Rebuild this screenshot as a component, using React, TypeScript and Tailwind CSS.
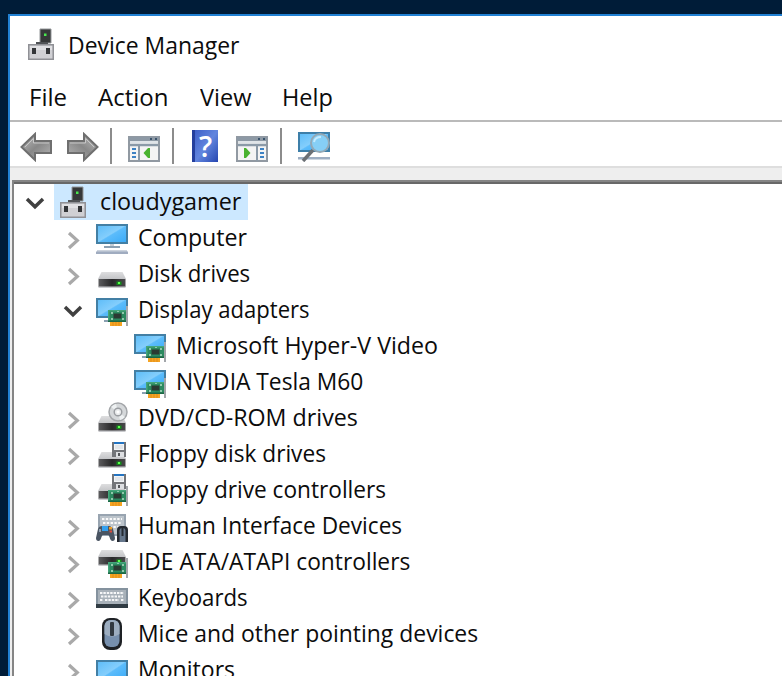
import React, { useLayoutEffect, useRef, useState } from "react";

const FONT = "font-['Open_Sans','Noto_Sans',sans-serif]";

function Label({ text, width }: { text: string; width: number }) {
  const ref = useRef<HTMLSpanElement>(null);
  const [scale, setScale] = useState(1);
  useLayoutEffect(() => {
    if (ref.current) setScale(width / ref.current.offsetWidth);
  }, [width]);
  return (
    <span className="block shrink-0" style={{ width }}>
      <span
        ref={ref}
        className="inline-block origin-left whitespace-nowrap text-[24px] leading-[34px] text-[#0c0c0c]"
        style={{ transform: `scaleX(${scale})` }}
      >
        {text}
      </span>
    </span>
  );
}

function Svg({ children, w = 32, h = 32 }: { children: React.ReactNode; w?: number; h?: number }) {
  return (
    <svg width={w} height={h} viewBox={`0 0 ${w} ${h}`} fill="none" className="block shrink-0">
      {children}
    </svg>
  );
}

function Defs() {
  return (
    <svg width="0" height="0" className="absolute">
      <defs>
        <linearGradient id="screen" x1="0" y1="0" x2="1" y2="1">
          <stop offset="0" stopColor="#5cbcf8" />
          <stop offset="0.48" stopColor="#84cefc" />
          <stop offset="0.52" stopColor="#5cbcfb" />
          <stop offset="1" stopColor="#38aaf8" />
        </linearGradient>
        <linearGradient id="metal" x1="0" y1="0" x2="0" y2="1">
          <stop offset="0" stopColor="#dededf" />
          <stop offset="1" stopColor="#c3c4c7" />
        </linearGradient>
        <linearGradient id="dark" x1="0" y1="0" x2="1" y2="0">
          <stop offset="0" stopColor="#5c5c5e" />
          <stop offset="0.5" stopColor="#29292a" />
          <stop offset="1" stopColor="#4a4a4c" />
        </linearGradient>
        <linearGradient id="arrow" x1="0" y1="0" x2="1" y2="1">
          <stop offset="0" stopColor="#c2c2c2" />
          <stop offset="0.5" stopColor="#888" />
          <stop offset="1" stopColor="#b5b5b5" />
        </linearGradient>
      </defs>
    </svg>
  );
}

function Screen({ y = 2, h = 20 }: { y?: number; h?: number }) {
  return <rect x="1" y={y + 1} width="30" height={h - 2} fill="url(#screen)" stroke="#437fa4" strokeWidth="2" />;
}

function Drive({ y }: { y: number }) {
  return (
    <g transform={`translate(0 ${y})`}>
      <path d="M5.5 0H26.5L30 7H2Z" fill="url(#metal)" />
      <rect x="2.5" y="7" width="27" height="8" fill="url(#dark)" />
      <rect x="2.5" y="14.5" width="27" height="1.5" fill="#c9cacd" />
      <rect x="20.5" y="9.5" width="5" height="3.5" fill="#168c1c" />
      <rect x="22" y="10" width="2" height="2" fill="#5cff4c" />
    </g>
  );
}

function Card() {
  return (
    <g>
      <rect x="30" y="12" width="2" height="20" fill="#a3a6aa" />
      <rect x="12" y="16" width="18" height="12" fill="#2c8a60" />
      <path d="M12 16h18v1.5H12zM12 16h1.5v12H12z" fill="#45a67b" />
      <path d="M12 26.5h18V28H12z" fill="#1c6744" />
      <rect x="17.5" y="19.5" width="8" height="5" fill="#2b3a33" />
      <path d="M15 18h2v2h-2zM26 18h2v2h-2zM15 24h2v2h-2zM26 24h2v2h-2zM21 17h2v1h-2z" fill="#91c9ac" />
      <rect x="14" y="28" width="12" height="4" fill="#f6a423" />
      <path d="M17 28v4M20 28v4M23 28v4" stroke="#e08c1a" strokeWidth="1" />
    </g>
  );
}

function Floppy({ y }: { y: number }) {
  return (
    <g transform={`translate(16 ${y})`}>
      <rect width="14" height="15" fill="#737579" />
      <rect x="2" width="10" height="8" fill="#f2f4f6" />
      <rect x="2" width="10" height="2" fill="#2374c2" />
      <path d="M3 4h8M3 6h8" stroke="#d3d7db" />
      <rect x="4" y="10" width="8" height="5" fill="#dddfe2" />
      <rect x="6" y="11" width="2" height="3" fill="#54565a" />
    </g>
  );
}

const icons: Record<string, React.ReactNode> = {
  computer: (
    <>
      <Screen />
      <rect x="14" y="22" width="4" height="2" fill="#c6ced6" />
      <rect x="8" y="24" width="16" height="2" fill="#8ba0b2" />
      <path d="M2 28h28l2 2v2H0v-2z" fill="#a0acc0" />
      <path d="M2 28h28l1 1.5H1z" fill="#ccd3dd" />
    </>
  ),
  disk: <Drive y={14} />,
  display: (
    <>
      <Screen y={4} />
      <rect x="8" y="26" width="5" height="2" fill="#8ba0b2" />
      <Card />
    </>
  ),
  dvd: (
    <>
      <Drive y={14} />
      <circle cx="22" cy="10" r="9" fill="#d5d8da" stroke="#a4a7aa" strokeWidth="1.5" />
      <path d="M22 10L15 5a9 9 0 0 1 5-3zM22 10l7 5a9 9 0 0 1-5 3z" fill="#eef1f2" />
      <circle cx="22" cy="10" r="3.8" fill="#e8eaeb" stroke="#9a9da1" strokeWidth="1.4" />
      <circle cx="22" cy="10" r="1.5" fill="#fff" />
    </>
  ),
  floppy: (
    <>
      <Drive y={14} />
      <Floppy y={4} />
    </>
  ),
  floppyController: (
    <>
      <Drive y={10} />
      <Floppy y={0} />
      <Card />
    </>
  ),
  hid: (
    <>
      <rect x="3" y="5" width="26" height="20" fill="#bcc4cb" stroke="#98a4b0" strokeWidth="2" />
      <path d="M6 9h20M7 13h18M6 17h20" stroke="#fafafa" strokeWidth="2" strokeDasharray="2.4 1.4" />
      <path
        d="M0 28L2 19Q3 16 6 16H13Q16 16 17 19L19 28Q19 31 16.5 31Q14.5 31 13.5 27L12.5 25H6.5L5.5 27Q4.5 31 2.5 31Q0 31 0 28Z"
        fill="#4a5563"
      />
      <path d="M3 19h2v3H3z" fill="#8fa0b2" />
      <rect x="6" y="16" width="6" height="5" fill="#35a1ef" />
      <path d="M13 17h3v2.5h-3z" fill="#f0a128" />
      <path d="M13.5 20.5h2.5v2h-2.5z" fill="#de4b3a" />
      <path d="M21 32V20Q21 16 25 16H28Q32 16 32 20V32Z" fill="#252a31" />
      <path d="M23.5 32V21Q23.5 18 26.5 18T29.5 21V32Z" fill="#66778c" />
      <path d="M26.5 18v8" stroke="#252a31" strokeWidth="2" />
    </>
  ),
  ide: (
    <>
      <Drive y={4} />
      <Card />
    </>
  ),
  keyboard: (
    <>
      <rect x="1" y="7" width="30" height="17" fill="#a8b1b9" stroke="#84929e" strokeWidth="2" />
      <path
        d="M4 11h24M5 14.5h22M4 18h3M9 18h14M25 18h3"
        stroke="#f6f7f8"
        strokeWidth="2"
        strokeDasharray="2.4 1"
      />
      <rect x="0" y="22" width="32" height="4" fill="#303b43" />
    </>
  ),
  mouse: (
    <>
      <rect x="6" y="0" width="20" height="32" rx="8" fill="#1e2125" />
      <rect x="8.5" y="2" width="15" height="27" rx="6" fill="#7790ae" />
      <path d="M8.5 16V8Q9 2 16 2Q23 2 23.5 8V16Q16 21 8.5 16Z" fill="#9cadc0" />
      <rect x="14" y="4" width="4" height="14" rx="1" fill="#303840" />
    </>
  ),
  monitor: (
    <>
      <Screen y={6} h={22} />
      <rect x="8" y="30" width="16" height="2" fill="#8ba0b2" />
    </>
  ),
};

function DeviceIcon() {
  return (
    <Svg w={26} h={32}>
      <path d="M12 1h11v14H12z" fill="#363839" stroke="#95989b" strokeWidth="1" />
      <rect x="16" y="5.5" width="2.5" height="2.5" fill="#49e84e" />
      <path d="M8 14h12v2H8z" fill="#505356" />
      <rect x="0.75" y="16.75" width="24.5" height="14.5" fill="#d0d0d4" stroke="#909196" strokeWidth="1.5" />
      <path d="M2 18h22v4H2z" fill="#e0e0e3" />
      <path d="M4 20h4v6H4zM18 20h4v6h-4z" fill="#333538" />
    </Svg>
  );
}

function ChevronRight() {
  return (
    <Svg w={20} h={36}>
      <path d="M6 13L14.3 20.5L6 28" stroke="#a9a9a9" strokeWidth="3.2" />
    </Svg>
  );
}

function ChevronDown() {
  return (
    <Svg w={20} h={36}>
      <path d="M2 15L10 22.7L18 15" stroke="#404040" strokeWidth="3.5" />
    </Svg>
  );
}

function Arrow({ flip }: { flip?: boolean }) {
  return (
    <svg width="33" height="30" viewBox="0 0 33 30" className={flip ? "block -scale-x-100" : "block"}>
      <path d="M1.5 15L15 2V9H31V21H15V28Z" fill="url(#arrow)" stroke="#6f6f6f" strokeWidth="2" />
      <path d="M5 15L13.5 6.5V11H29" fill="none" stroke="#c7c7c7" strokeWidth="1" />
    </svg>
  );
}

function PaneIcon({ flip }: { flip?: boolean }) {
  const side = flip ? 20 : 0;
  return (
    <Svg w={32} h={26}>
      <rect x="1" y="1" width="30" height="24" fill="#f4f4f4" stroke="#9199a2" strokeWidth="2" />
      <rect x="1" y="1" width="30" height="4" fill="#8d99a5" />
      <path d="M22 3h2M27 3h2" stroke="#3a536b" strokeWidth="2" />
      <path d="M2 6h28" stroke="#dfe4e8" strokeWidth="2" />
      <path d="M2 9h28" stroke="#8b9aa8" strokeWidth="2.5" />
      <path d={flip ? "M21 9v16" : "M11 9v16"} stroke="#8b9aa8" strokeWidth="2" />
      <path d={`M${side + 4} 13h4M${side + 4} 17h4M${side + 4} 21h4`} stroke="#3d82c4" strokeWidth="2" />
      <path d={flip ? "M8 12h2L14.5 17L10 22H8Z" : "M22 12h-2L15.5 17L20 22H22Z"} fill="#49b22f" />
    </Svg>
  );
}

function Separator() {
  return <div className="h-9 w-[2px] shrink-0 bg-[#8c8c8c]" />;
}

function Toolbar() {
  return (
    <div className="flex h-11 shrink-0 items-center pl-[10px]">
      <div className="pt-[5px]"><Arrow /></div>
      <div className="ml-[13px] pt-[5px]"><Arrow flip /></div>
      <div className="ml-[11px] pt-1"><Separator /></div>
      <div className="ml-4 pt-[9px]"><PaneIcon /></div>
      <div className="ml-[12px] pt-1"><Separator /></div>
      <div className="ml-[18px] pt-1">
        <div className="flex h-8 w-[26px] items-center justify-center border-l-[3px] border-[#243f9d] bg-linear-to-br from-[#3e60c8] via-[#6285de] to-[#2745b0] pr-[2px] font-['Open_Sans',sans-serif] text-[29px] font-semibold leading-8 text-white">
          ?
        </div>
      </div>
      <div className="ml-[18px] pt-[9px]"><PaneIcon flip /></div>
      <div className="ml-[12px] pt-1"><Separator /></div>
      <div className="ml-4 pt-1">
        <Svg w={32} h={32}>
          <rect x="1" y="3" width="30" height="18" fill="url(#screen)" stroke="#3d7fa9" strokeWidth="2" />
          <path d="M0 27h32v2.5H0z" fill="#9daec2" />
          <path d="M15 20L5 31" stroke="#6b7075" strokeWidth="3.5" />
          <circle cx="22" cy="13" r="9" fill="#86cff6" stroke="#93a8b5" strokeWidth="2" />
          <path d="M16 12Q17 7 23 7" stroke="#c4ebff" strokeWidth="2" />
        </Svg>
      </div>
    </div>
  );
}

interface Device {
  text: string;
  width: number;
  icon: string;
  open?: boolean;
  child?: boolean;
}

const devices: Device[] = [
  { text: "Computer", width: 109, icon: "computer" },
  { text: "Disk drives", width: 112, icon: "disk" },
  { text: "Display adapters", width: 172, icon: "display", open: true },
  { text: "Microsoft Hyper-V Video", width: 262, icon: "display", child: true },
  { text: "NVIDIA Tesla M60", width: 187, icon: "display", child: true },
  { text: "DVD/CD-ROM drives", width: 220, icon: "dvd" },
  { text: "Floppy disk drives", width: 188, icon: "floppy" },
  { text: "Floppy drive controllers", width: 248, icon: "floppyController" },
  { text: "Human Interface Devices", width: 264, icon: "hid" },
  { text: "IDE ATA/ATAPI controllers", width: 272, icon: "ide" },
  { text: "Keyboards", width: 110, icon: "keyboard" },
  { text: "Mice and other pointing devices", width: 340, icon: "mouse" },
  { text: "Monitors", width: 97, icon: "monitor" },
];

function DeviceRow({ device }: { device: Device }) {
  return (
    <div className={`flex h-9 shrink-0 items-start ${device.child ? "pl-[120px]" : "pl-[49px]"}`}>
      {!device.child && (
        <div className="mr-[13px]">{device.open ? <ChevronDown /> : <ChevronRight />}</div>
      )}
      <div className="mr-[10px] pt-[2px]">
        <Svg>{icons[device.icon]}</Svg>
      </div>
      <Label text={device.text} width={device.width} />
    </div>
  );
}

export default function App() {
  return (
    <div className={`flex h-[676px] w-[782px] overflow-hidden bg-[#001c38] pl-2 pt-[14px] ${FONT}`}>
      <Defs />
      <div className="flex min-w-0 flex-1 flex-col border-l-2 border-t-2 border-[#2181d4] bg-white">
        <div className="flex h-16 shrink-0 items-start pl-[18px] pt-[12px]">
          <DeviceIcon />
          <div className="ml-[14px]"><Label text="Device Manager" width={171} /></div>
        </div>
        <div className="flex h-10 shrink-0 items-start pl-[19px]">
          <div className="w-[69px]"><Label text="File" width={38} /></div>
          <div className="w-[102px]"><Label text="Action" width={70} /></div>
          <div className="w-[82px]"><Label text="View" width={51} /></div>
          <Label text="Help" width={51} />
        </div>
        <div className="h-[2px] shrink-0 bg-[#bababa]" />
        <Toolbar />
        <div className="h-[14px] shrink-0 border-t-2 border-[#dedede] bg-[#eeeeee]" />
        <div className="flex min-h-0 flex-1 bg-[#eeeeee] pl-[2px]">
          <div className="flex min-w-0 flex-1 flex-col overflow-hidden border-l-2 border-t-2 border-[#858585] bg-white">
            <div className="h-[2px] shrink-0 bg-[#686868]" />
            <div className="flex h-9 shrink-0 pl-[11px]">
              <ChevronDown />
              <div className="ml-[9px] flex h-9 w-[194px] bg-[#cce8ff] pl-[6px]">
                <div className="pt-[2px]"><DeviceIcon /></div>
                <div className="ml-[14px]"><Label text="cloudygamer" width={141} /></div>
              </div>
            </div>
            {devices.map((device) => (
              <DeviceRow key={device.text} device={device} />
            ))}
          </div>
        </div>
      </div>
    </div>
  );
}
